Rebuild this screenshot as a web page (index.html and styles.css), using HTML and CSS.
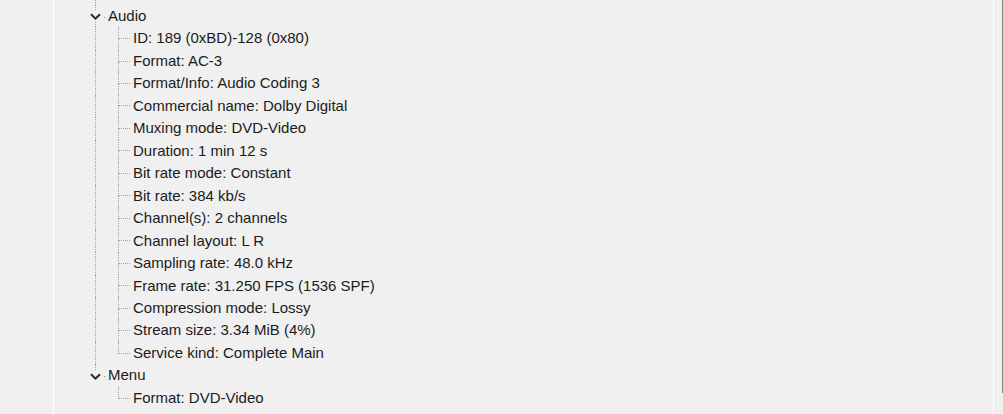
FILE: index.html
```html
<!DOCTYPE html>
<html>
<head>
<meta charset="utf-8">
<link rel="stylesheet" href="styles.css">
</head>
<body>
<div class="window">
  <div class="gutter"></div>
  <div class="pane">
    <div class="tree">
      <div class="row child last">
        <span class="pad"></span><span class="g0"></span><span class="g1 hidden"><span class="g1-top"></span><span class="g1-bot"></span></span><span class="label"></span>
      </div>
      <div class="row parent">
        <span class="pad-p"></span>
        <span class="twisty"><span class="seg"></span><svg class="chev" width="11" height="7" viewBox="0 0 11 7"><polyline points="1,1.2 5.5,5.6 10,1.2" fill="none" stroke="#2a2a2a" stroke-width="2"/></svg><span class="seg"></span></span>
        <span class="dot"></span><span class="label">Audio</span>
      </div>
      <div class="row child"><span class="pad"></span><span class="g0"></span><span class="g1"><span class="g1-top"></span><span class="g1-bot"></span></span><span class="label">ID: 189 (0xBD)-128 (0x80)</span></div>
      <div class="row child"><span class="pad"></span><span class="g0"></span><span class="g1"><span class="g1-top"></span><span class="g1-bot"></span></span><span class="label">Format: AC-3</span></div>
      <div class="row child"><span class="pad"></span><span class="g0"></span><span class="g1"><span class="g1-top"></span><span class="g1-bot"></span></span><span class="label">Format/Info: Audio Coding 3</span></div>
      <div class="row child"><span class="pad"></span><span class="g0"></span><span class="g1"><span class="g1-top"></span><span class="g1-bot"></span></span><span class="label">Commercial name: Dolby Digital</span></div>
      <div class="row child"><span class="pad"></span><span class="g0"></span><span class="g1"><span class="g1-top"></span><span class="g1-bot"></span></span><span class="label">Muxing mode: DVD-Video</span></div>
      <div class="row child"><span class="pad"></span><span class="g0"></span><span class="g1"><span class="g1-top"></span><span class="g1-bot"></span></span><span class="label">Duration: 1 min 12 s</span></div>
      <div class="row child"><span class="pad"></span><span class="g0"></span><span class="g1"><span class="g1-top"></span><span class="g1-bot"></span></span><span class="label">Bit rate mode: Constant</span></div>
      <div class="row child"><span class="pad"></span><span class="g0"></span><span class="g1"><span class="g1-top"></span><span class="g1-bot"></span></span><span class="label">Bit rate: 384 kb/s</span></div>
      <div class="row child"><span class="pad"></span><span class="g0"></span><span class="g1"><span class="g1-top"></span><span class="g1-bot"></span></span><span class="label">Channel(s): 2 channels</span></div>
      <div class="row child"><span class="pad"></span><span class="g0"></span><span class="g1"><span class="g1-top"></span><span class="g1-bot"></span></span><span class="label">Channel layout: L R</span></div>
      <div class="row child"><span class="pad"></span><span class="g0"></span><span class="g1"><span class="g1-top"></span><span class="g1-bot"></span></span><span class="label">Sampling rate: 48.0 kHz</span></div>
      <div class="row child"><span class="pad"></span><span class="g0"></span><span class="g1"><span class="g1-top"></span><span class="g1-bot"></span></span><span class="label">Frame rate: 31.250 FPS (1536 SPF)</span></div>
      <div class="row child"><span class="pad"></span><span class="g0"></span><span class="g1"><span class="g1-top"></span><span class="g1-bot"></span></span><span class="label">Compression mode: Lossy</span></div>
      <div class="row child"><span class="pad"></span><span class="g0"></span><span class="g1"><span class="g1-top"></span><span class="g1-bot"></span></span><span class="label">Stream size: 3.34 MiB (4%)</span></div>
      <div class="row child last"><span class="pad"></span><span class="g0"></span><span class="g1"><span class="g1-top"></span><span class="g1-bot"></span></span><span class="label">Service kind: Complete Main</span></div>
      <div class="row parent lastparent">
        <span class="pad-p"></span>
        <span class="twisty"><span class="seg"></span><svg class="chev" width="11" height="7" viewBox="0 0 11 7"><polyline points="1,1.2 5.5,5.6 10,1.2" fill="none" stroke="#2a2a2a" stroke-width="2"/></svg><span class="seg seg-bot"></span></span>
        <span class="dot"></span><span class="label">Menu</span>
      </div>
      <div class="row child last nog0"><span class="pad"></span><span class="g0"></span><span class="g1"><span class="g1-top"></span><span class="g1-bot"></span></span><span class="label">Format: DVD-Video</span></div>
    </div>
  </div>
  <div class="spacer"></div>
  <div class="edge"></div>
</div>
</body>
</html>
```

FILE: styles.css
```css
html, body {
  margin: 0;
  padding: 0;
}
body {
  width: 1003px;
  height: 414px;
  overflow: hidden;
  background: #f0f0f0;
  font-family: "Liberation Sans", Arial, sans-serif;
  font-size: 15px;
  color: #1b1b1b;
}
.window {
  display: flex;
  height: 414px;
}
.gutter {
  width: 53px;
  flex: none;
}
.pane {
  width: 939px;
  flex: none;
  border-left: 1px solid #ffffff;
  border-right: 1px solid #ffffff;
  overflow: hidden;
}
.spacer {
  width: 8px;
  flex: none;
}
.edge {
  width: 1px;
  height: 393px;
  background: #8a8a8a;
  flex: none;
}
.tree {
  display: flex;
  flex-direction: column;
  margin-top: -17.6px;
}
.row {
  display: flex;
  align-items: stretch;
  height: 22.47px;
  line-height: 22.47px;
  white-space: nowrap;
}
.pad { width: 41px; flex: none; }
.pad-p { width: 36px; flex: none; }
.g0 {
  width: 22px;
  flex: none;
  border-left: 1px dotted #a3a3a3;
}
.nog0 .g0 { border-left-color: transparent; }
.g1 {
  width: 12px;
  flex: none;
  display: flex;
  flex-direction: column;
}
.g1.hidden { visibility: hidden; }
.g1-top {
  flex: 1;
  border-left: 1px dotted #a3a3a3;
  border-bottom: 1px dotted #a3a3a3;
}
.g1-bot {
  flex: 1;
  border-left: 1px dotted #a3a3a3;
}
.last .g1-bot { border-left-color: transparent; }
.child .label { margin-left: 3px; }
.twisty {
  width: 11px;
  flex: none;
  display: flex;
  flex-direction: column;
  align-items: center;
}
.seg {
  flex: 1;
  width: 0;
  border-left: 1px dotted #a3a3a3;
}
.lastparent .seg-bot { border-left-color: transparent; }
.chev {
  display: block;
  flex: none;
  margin: 3px 0 2px;
}
.dot {
  width: 1px;
  height: 1px;
  background: #8a8a8a;
  align-self: center;
  margin: 2px 3px 0 3px;
  flex: none;
}
.parent .label { margin-left: 0; }
```
